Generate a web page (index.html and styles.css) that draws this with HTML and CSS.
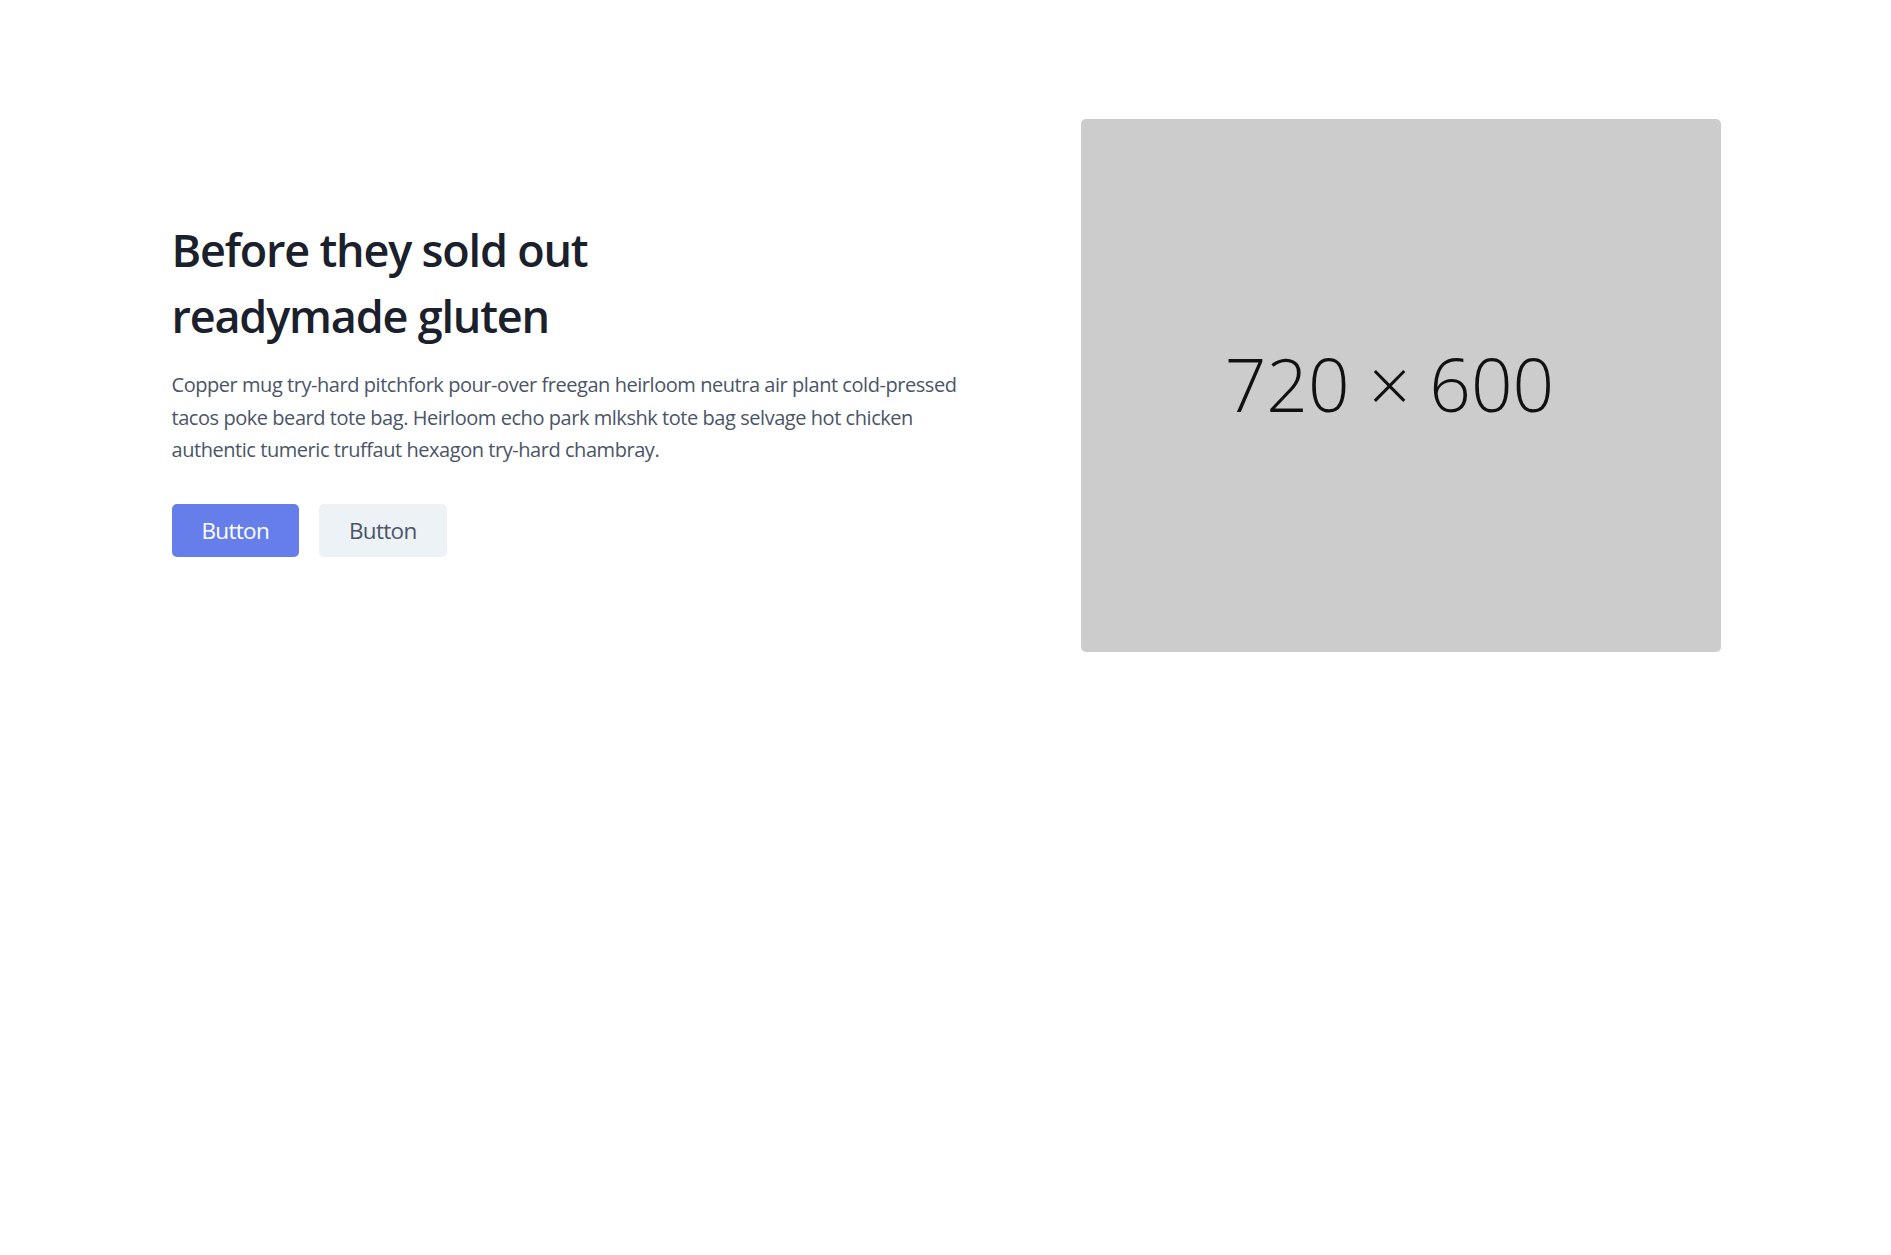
FILE: index.html
```html
<!DOCTYPE html>
<html lang="en">
<head>
<meta charset="utf-8">
<title>Hero</title>
<link rel="stylesheet" href="styles.css">
</head>
<body>
<section class="hero">
  <div class="container">
    <div class="copy">
      <h1 class="title">Before they sold out<br>readymade gluten</h1>
      <p class="lead">Copper mug try-hard pitchfork pour-over freegan heirloom neutra air plant cold-pressed tacos poke beard tote bag. Heirloom echo park mlkshk tote bag selvage hot chicken authentic tumeric truffaut hexagon try-hard chambray.</p>
      <div class="actions">
        <button class="btn btn-primary">Button</button>
        <button class="btn btn-secondary">Button</button>
      </div>
    </div>
    <div class="media">
      <div class="placeholder"><span class="placeholder-text">720 × 600</span></div>
    </div>
  </div>
</section>
</body>
</html>
```

FILE: styles.css
```css
* { box-sizing: border-box; }
html, body { margin: 0; padding: 0; background: #fff; }
body { font-family: "Open Sans", "Noto Sans", sans-serif; color: #718096; }
.hero { width: 100%; }
.container {
  max-width: 1600px;
  margin: 0 auto;
  padding: 119px 25px 120px 26px;
  display: flex;
  align-items: center;
}
.copy {
  flex-grow: 1;
  padding-right: 120px;
  padding-top: 3px;
  display: flex;
  flex-direction: column;
  align-items: flex-start;
}
.title {
  margin: 0 0 20px;
  font-size: 45px;
  line-height: 66px;
  font-weight: 600;
  letter-spacing: -1.2px;
  color: #1a202c;
}
.lead {
  margin: 0 0 37px;
  font-size: 20px;
  line-height: 32.5px;
  letter-spacing: -0.45px;
  color: #4a5568;
}
.actions { display: flex; gap: 20px; }
.btn {
  font-family: inherit;
  font-size: 22.5px;
  line-height: 33px;
  letter-spacing: -0.7px;
  padding: 10px 30px;
  border: 0;
  border-radius: 5px;
}
.btn-primary { background: #667eea; color: #fff; }
.btn-secondary { background: #edf2f7; color: #4a5568; }
.media { flex: 0 0 640px; }
.placeholder {
  width: 640px;
  height: 533px;
  background: #cccccc;
  border-radius: 5px;
  display: flex;
  align-items: center;
  justify-content: center;
  padding: 0 22px 5px 0;
}
.placeholder-text {
  font-size: 73px;
  font-weight: 300;
  color: #111;
}
```
